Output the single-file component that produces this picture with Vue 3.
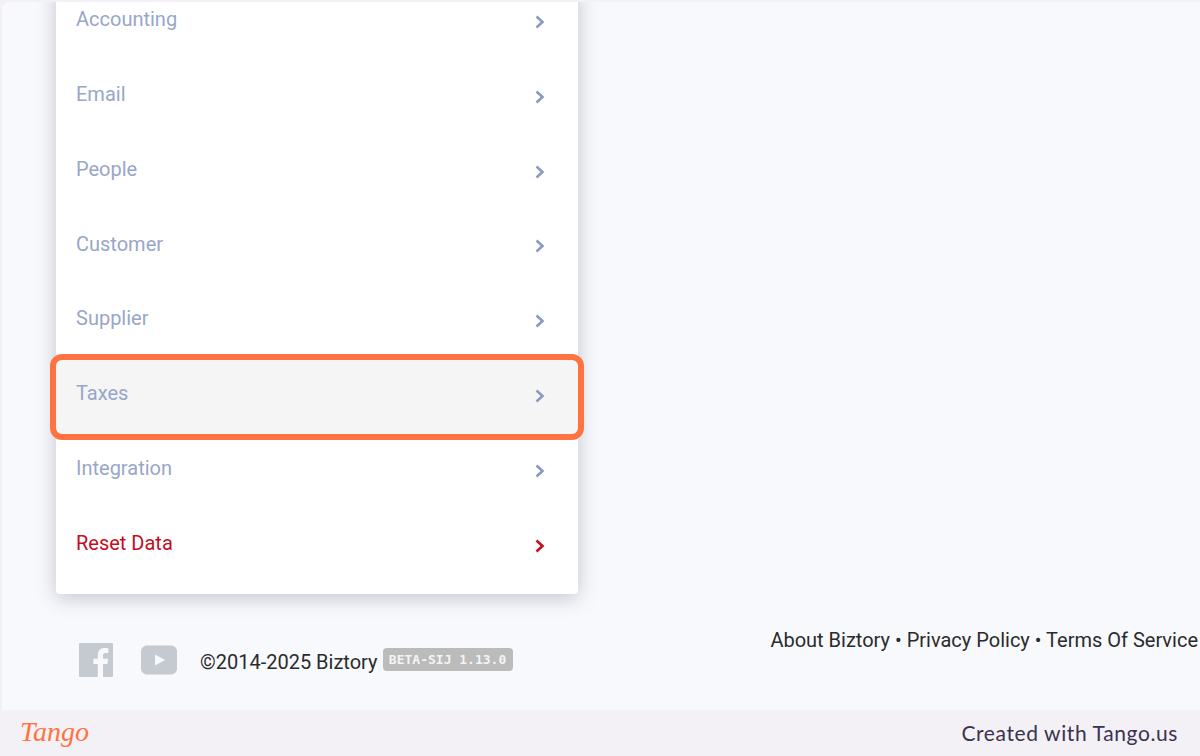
<template>
  <div class="page">
    <div class="main">
      <div class="card">
        <div
          v-for="item in items"
          :key="item.label"
          class="row"
          :class="{ danger: item.danger, active: item.active }"
        >
          <span class="label">{{ item.label }}</span>
          <svg class="chev" width="12" height="16" viewBox="0 0 12 16">
            <path d="M2.5 2.5 L8.5 8 L2.5 13.5" fill="none" stroke="currentColor" stroke-width="2.6" />
          </svg>
          <div v-if="item.active" class="ring"></div>
        </div>
      </div>

      <div class="footer">
        <div class="left">
          <svg class="fb" width="34" height="34" viewBox="0 0 34 34">
            <path fill="#c5cad1" d="M1 0h32a1 1 0 0 1 1 1v32a1 1 0 0 1-1 1h-9V21h4.400l.7-5.200H24v-3.300c0-1.500.4-2.500 2.600-2.500h2.700V5.300c-.5-.1-2.100-.2-3.900-.2-3.900 0-6.600 2.400-6.600 6.800v3.900h-4.400V21h4.400v13H1a1 1 0 0 1-1-1V1a1 1 0 0 1 1-1z" />
          </svg>
          <svg class="yt" width="36" height="30" viewBox="0 0 36 30">
            <path fill="#c5cad1" d="M6 0.500h24c3.300 0 6 2.700 6 6v17c0 3.300-2.700 6-6 6H6c-3.300 0-6-2.700-6-6v-17c0-3.300 2.700-6 6-6z" />
            <path fill="#f8f9fd" d="M14 9.500 L24 15 L14 20.500 z" />
          </svg>
          <span class="copy">©2014-2025 Biztory</span>
          <span class="badge">BETA-SIJ 1.13.0</span>
        </div>
        <div class="links">About Biztory • Privacy Policy • Terms Of Service</div>
      </div>
    </div>

    <div class="bar">
      <span class="logo">Tango</span>
      <span class="credit">Created with Tango.us</span>
    </div>
  </div>
</template>

<script setup>
const items = [
  { label: 'Accounting' },
  { label: 'Email' },
  { label: 'People' },
  { label: 'Customer' },
  { label: 'Supplier' },
  { label: 'Taxes', active: true },
  { label: 'Integration' },
  { label: 'Reset Data', danger: true }
]
</script>

<style>
html, body {
  overflow: hidden;
  background: #f3f1f6;
}
</style>

<style scoped>
.page {
  width: 1200px;
  height: 756px;
  display: flex;
  flex-direction: column;
  background: #f3f1f6;
  overflow: hidden;
  font-family: Roboto, "Liberation Sans", sans-serif;
}

.main {
  height: 708px;
  margin: 2px 0 0 2px;
  background: #f8f9fd;
  border-top-left-radius: 8px;
  overflow: hidden;
  flex-shrink: 0;
}

.card {
  width: 522px;
  margin: -16.4px 0 0 54px;
  padding-bottom: 9.6px;
  background: #fff;
  border-radius: 4px;
  box-shadow: 0 4px 20px rgba(60, 66, 80, 0.28);
  position: relative;
}

.row {
  height: 74.8px;
  position: relative;
  color: #98a6c8;
}

.row.active {
  background: #f5f5f5;
}

.row.danger {
  color: #c40d1e;
}

.label {
  position: absolute;
  left: 20px;
  top: 22.6px;
  font-size: 20px;
  line-height: 23px;
}

.chev {
  position: absolute;
  left: 478px;
  top: 28.4px;
  color: #8b9ac0;
}

.danger .chev {
  color: #c40d1e;
}

.ring {
  position: absolute;
  left: -6px;
  right: -6px;
  top: -6px;
  bottom: -6px;
  border: 6px solid #ff7342;
  border-radius: 12px;
}

.footer {
  display: flex;
  justify-content: space-between;
  margin-left: 77px;
  margin-top: 30px;
  width: 1140px;
}

.left {
  display: flex;
  align-items: center;
  height: 54px;
  padding-top: 9px;
}

.yt {
  margin-left: 28px;
}

.copy {
  margin-left: 23px;
  font-size: 20px;
  color: #2b2b2b;
  padding-top: 4px;
}

.badge {
  margin: 0 0 0 5px;
  width: 130px;
  height: 23px;
  line-height: 23px;
  border-radius: 4px;
  background: #bbbbbb;
  color: #f4f4f4;
  font-family: "DejaVu Sans Mono", monospace;
  font-size: 13px;
  font-weight: 700;
  text-align: center;
  white-space: nowrap;
}

.links {
  font-size: 20px;
  color: #2b2b2b;
  white-space: nowrap;
  line-height: 22px;
  margin-top: 5px;
  margin-right: 21px;
}

.bar {
  flex: 1;
  display: flex;
  align-items: center;
  justify-content: space-between;
  padding: 0 22px 2px 20px;
}

.logo {
  font-family: "Liberation Serif", serif;
  font-style: italic;
  font-size: 28px;
  color: #ff7342;
}

.credit {
  font-family: Lato, sans-serif;
  font-size: 21px;
  letter-spacing: 0.6px;
  color: #3a3350;
}
</style>
